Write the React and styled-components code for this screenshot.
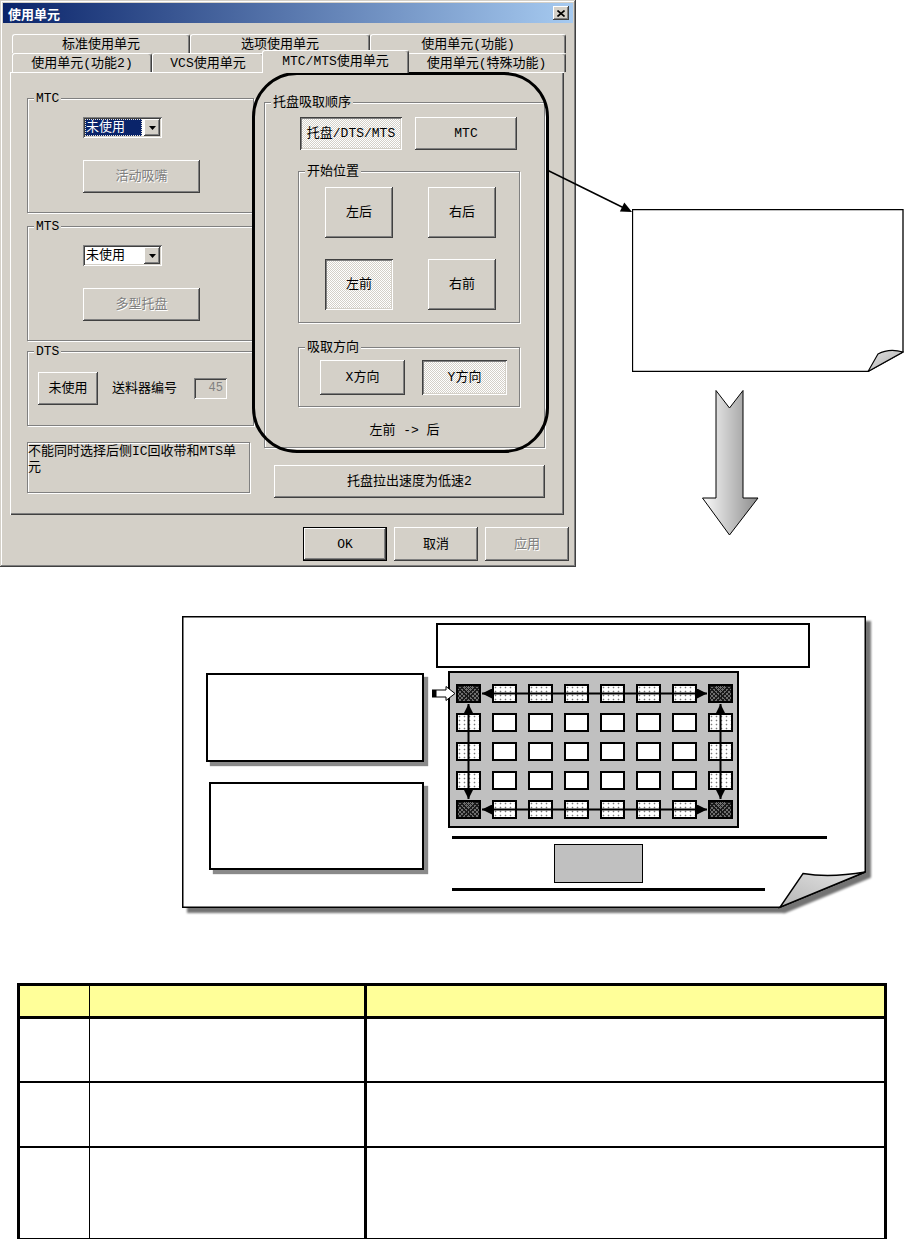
import React from 'react';
import styled, { createGlobalStyle, css } from 'styled-components';

const FACE = '#d4d0c8';

const GlobalStyle = createGlobalStyle`
  html, body {
    margin: 0;
    background: #fff;
  }
  body {
    font-family: "Liberation Mono", "Noto Sans CJK SC", monospace;
  }
`;

const raised = css`
  box-shadow: inset -1px -1px #404040, inset 1px 1px #fff, inset -2px -2px #808080,
    inset 2px 2px ${FACE};
`;
const pressed = css`
  box-shadow: inset 1px 1px #404040, inset -1px -1px #fff, inset 2px 2px #808080,
    inset -2px -2px ${FACE};
`;
const sunken = css`
  box-shadow: inset 1px 1px #808080, inset -1px -1px #fff, inset 2px 2px #404040,
    inset -2px -2px ${FACE};
`;
const etched = css`
  border: 1px solid #808080;
  box-shadow: inset 1px 1px #fff, 1px 1px #fff;
`;

const Page = styled.div`
  width: 904px;
  height: 1239px;
  overflow: hidden;
`;

const Top = styled.section`
  position: relative;
  display: flex;
  height: 567px;
`;

/* ---------- dialog ---------- */

const Dialog = styled.div`
  box-sizing: border-box;
  width: 576px;
  height: 567px;
  padding: 3px;
  background: ${FACE};
  box-shadow: inset -1px -1px #404040, inset 1px 1px ${FACE}, inset -2px -2px #808080,
    inset 2px 2px #fff;
  font-size: 13px;
  line-height: 15px;
  color: #000;
  display: flex;
  flex-direction: column;
`;

const TitleBar = styled.div`
  height: 20px;
  flex: none;
  padding: 0 4px 0 5px;
  display: flex;
  align-items: center;
  justify-content: space-between;
  background: linear-gradient(to right, #0a246a, #a6caf0);
  color: #fff;
  font-family: "Noto Sans CJK SC", sans-serif;
  font-weight: bold;
  font-size: 13px;
`;

const CloseBox = styled.span`
  width: 16px;
  height: 14px;
  background: ${FACE};
  ${raised};
  display: flex;
  align-items: center;
  justify-content: center;
`;

const TabRow = styled.div`
  display: flex;
  width: 554px;
  height: 19px;
  margin-left: 9px;
  margin-top: ${p => p.$top || 0}px;
`;

const Tab = styled.div`
  flex: 0 0 ${p => p.$w}px;
  box-sizing: border-box;
  height: 19px;
  background: ${FACE};
  border-top: 1px solid #fff;
  border-left: 1px solid #fff;
  border-right: 1px solid #404040;
  border-radius: 3px 3px 0 0;
  box-shadow: inset -1px 0 #808080;
  display: flex;
  align-items: center;
  justify-content: center;
  white-space: nowrap;
  ${p =>
    p.$active &&
    css`
      position: relative;
      z-index: 2;
      flex-basis: ${p.$w + 4}px;
      height: 23px;
      margin: -3px -2px -1px;
      padding-bottom: 2px;
    `}
`;

const Panel = styled.div`
  box-sizing: border-box;
  width: 554px;
  height: 443px;
  margin-left: 7px;
  padding-left: 17px;
  display: flex;
  gap: 10px;
  box-shadow: inset 1px 1px #fff, inset -1px -1px #404040, inset -2px -2px #808080;
`;

const LeftCol = styled.div`
  display: flex;
  flex-direction: column;
  align-items: flex-start;
  padding-top: 26px;
`;

const RightCol = styled.div`
  display: flex;
  flex-direction: column;
  align-items: flex-start;
  padding-top: 30px;
`;

const Group = styled.div`
  position: relative;
  box-sizing: border-box;
  width: ${p => p.$w}px;
  height: ${p => p.$h}px;
  margin: ${p => p.$m || '0'};
  padding: ${p => p.$pad || '0'};
  ${etched};
  display: flex;
  flex-direction: ${p => (p.$row ? 'row' : 'column')};
  align-items: ${p => (p.$row ? 'center' : 'flex-start')};
  gap: ${p => p.$gap || 0}px;
`;

const Caption = styled.span`
  position: absolute;
  top: -8px;
  left: 6px;
  padding: 0 2px;
  background: ${FACE};
`;

const ButtonRow = styled.div`
  display: flex;
  gap: 13px;
  margin-left: 2px;
`;

const Btn = styled.button`
  box-sizing: border-box;
  flex: none;
  width: ${p => p.$w}px;
  height: ${p => p.$h}px;
  margin: ${p => p.$m || '0'};
  padding: 0;
  border: ${p => (p.$default ? '1px solid #000' : 'none')};
  background: ${FACE};
  font: inherit;
  color: #000;
  ${raised};
  ${p =>
    p.$checked &&
    css`
      background: repeating-conic-gradient(#fff 0 25%, ${FACE} 0 50%) 0 0 / 2px 2px;
      ${pressed};
    `}
  &:disabled {
    color: #808080;
    text-shadow: 1px 1px #fff;
  }
`;

const Combo = styled.div`
  box-sizing: border-box;
  width: 79px;
  height: 21px;
  padding: 2px;
  background: #fff;
  ${sunken};
  display: flex;
  gap: 2px;
`;

const ComboValue = styled.span`
  flex: 1;
  display: flex;
  align-items: center;
  padding-left: 1px;
  ${p =>
    p.$selected &&
    css`
      background: #0a246a;
      color: #fff;
      outline: 1px dotted #e8e4dc;
      outline-offset: -1px;
    `}
`;

const ComboButton = styled.span`
  width: 16px;
  height: 17px;
  background: ${FACE};
  ${raised};
  display: flex;
  align-items: center;
  justify-content: center;
`;

const FieldLabel = styled.span`
  margin-left: 14px;
  white-space: nowrap;
`;

const Edit = styled.div`
  box-sizing: border-box;
  width: 33px;
  height: 21px;
  margin-left: 17px;
  padding: 3px 4px 0 0;
  ${sunken};
  background: ${FACE};
  color: #808080;
  text-align: right;
  font-size: 12px;
`;

const Notice = styled.div`
  box-sizing: border-box;
  width: 223px;
  height: 51px;
  margin-top: 16px;
  padding: 1px 9px 0 0;
  ${etched};
  line-height: 16px;
`;

const StartGrid = styled.div`
  display: grid;
  grid-template-columns: 68px 68px;
  grid-auto-rows: 51px;
  column-gap: 35px;
  row-gap: 21px;
`;

const Status = styled.div`
  align-self: stretch;
  margin: 16px 0 0 -33px;
  text-align: center;
`;

const Footer = styled.div`
  display: flex;
  justify-content: flex-end;
  gap: 7px;
  margin-top: 12px;
  padding-right: 4px;
`;

/* ---------- annotations ---------- */

const Highlight = styled.div`
  position: absolute;
  left: 252px;
  top: 72px;
  width: 297px;
  height: 381px;
  box-sizing: border-box;
  border: 3px solid #000;
  border-radius: 45px;
  pointer-events: none;
`;

const Connector = styled.svg`
  position: absolute;
  left: 540px;
  top: 160px;
  overflow: visible;
`;

const NoteCol = styled.div`
  display: flex;
  flex-direction: column;
  align-items: flex-start;
  margin-left: 56px;
  padding-top: 209px;
`;

const DownArrow = styled.svg`
  margin: 18px 0 0 70px;
`;

/* ---------- tray diagram ---------- */

const Diagram = styled.div`
  position: relative;
  width: 684px;
  height: 292px;
  margin: 49px 0 0 182px;
`;

const Paper = styled.svg`
  position: absolute;
  left: 0;
  top: 0;
  overflow: visible;
  filter: drop-shadow(5px 5px 1px rgba(0, 0, 0, 0.55));
`;

const DiagramBody = styled.div`
  position: relative;
  display: flex;
  padding-top: 7px;
`;

const SideCol = styled.div`
  display: flex;
  flex-direction: column;
  align-items: flex-start;
  gap: 20px;
  padding: 50px 0 0 24px;
`;

const NoteBox = styled.div`
  box-sizing: border-box;
  width: ${p => p.$w}px;
  height: ${p => p.$h}px;
  margin-left: ${p => p.$ml || 0}px;
  background: #fff;
  border: 2px solid #000;
  ${p => p.$shadow && css`box-shadow: 4px 4px 1px #8a8a8a;`}
`;

const MainCol = styled.div`
  display: flex;
  flex-direction: column;
  align-items: flex-start;
  margin-left: 12px;
`;

const Tray = styled.div`
  position: relative;
  box-sizing: border-box;
  width: 291px;
  height: 157px;
  margin: 3px 0 0 12px;
  padding: 11px 0 0 6px;
  background: #c0c0c0;
  border: 2px solid #000;
  display: grid;
  grid-template-columns: repeat(8, 25px);
  grid-auto-rows: 19px;
  column-gap: 11px;
  row-gap: 10px;
`;

const cellLook = {
  corner: css`
    background-color: #6e6e6e;
    background-image: repeating-linear-gradient(45deg, #1a1a1a 0 1px, transparent 1px 3px),
      repeating-linear-gradient(-45deg, #1a1a1a 0 1px, transparent 1px 3px);
  `,
  edge: css`
    background: #fff radial-gradient(circle at 1.5px 1.5px, #777 0.7px, transparent 1.1px) 0 0 / 5px 4px;
  `,
  plain: css`
    background: #fff;
  `,
};

const Cell = styled.div`
  box-sizing: border-box;
  border: 2px solid #000;
  ${p => cellLook[p.$kind]};
`;

const TrayArrows = styled.svg`
  position: absolute;
  left: 0;
  top: 0;
  overflow: visible;
`;

const Rule = styled.div`
  width: ${p => p.$w}px;
  height: 3px;
  margin: ${p => p.$mt}px 0 0 16px;
  background: #000;
`;

const Slot = styled.div`
  box-sizing: border-box;
  width: 89px;
  height: 39px;
  margin: 5px 0 0 118px;
  background: #c0c0c0;
  border: 1.5px solid #000;
`;

/* ---------- table ---------- */

const InfoTable = styled.table`
  margin: 75px 0 0 17px;
  width: 870px;
  table-layout: fixed;
  border-collapse: collapse;
  border: 3px solid #000;
`;

const Th = styled.th`
  height: 30px;
  padding: 0;
  background: #ffff99;
  border-bottom: 3px solid #000;
  border-left: ${p => p.$sep || 'none'};
`;

const Td = styled.td`
  height: ${p => p.$h}px;
  padding: 0;
  border-top: 2px solid #000;
  border-left: ${p => p.$sep || 'none'};
`;

const THIN = '1px solid #000';
const THICK = '3px solid #000';

const cellKind = (r, c) => {
  const edgeR = r === 0 || r === 4;
  const edgeC = c === 0 || c === 7;
  if (edgeR && edgeC) return 'corner';
  if (edgeR || edgeC) return 'edge';
  return 'plain';
};

const DropGlyph = () => (
  <svg width="7" height="4" viewBox="0 0 7 4">
    <path d="M0 0 H7 L3.5 4 z" fill="#000" />
  </svg>
);

const Arrowhead = ({ id }) => (
  <marker id={id} viewBox="0 0 10 10" refX="10" refY="5" markerWidth="5" markerHeight="5" orient="auto-start-reverse">
    <path d="M0 0 L10 5 L0 10 z" fill="#000" />
  </marker>
);

const App = () => {
  const cells = [];
  for (let r = 0; r < 5; r++) {
    for (let c = 0; c < 8; c++) cells.push(<Cell key={`${r}-${c}`} $kind={cellKind(r, c)} />);
  }

  return (
    <Page>
      <GlobalStyle />
      <Top>
        <Dialog>
          <TitleBar>
            <span>使用单元</span>
            <CloseBox>
              <svg width="8" height="7" viewBox="0 0 8 7">
                <path d="M0.5 0.5 L7.5 6.5 M7.5 0.5 L0.5 6.5" stroke="#000" strokeWidth="1.6" />
              </svg>
            </CloseBox>
          </TitleBar>

          <TabRow $top={11}>
            <Tab $w={178}>标准使用单元</Tab>
            <Tab $w={180}>选项使用单元</Tab>
            <Tab $w={196}>使用单元(功能)</Tab>
          </TabRow>
          <TabRow>
            <Tab $w={140}>使用单元(功能2)</Tab>
            <Tab $w={112}>VCS使用单元</Tab>
            <Tab $w={143} $active>MTC/MTS使用单元</Tab>
            <Tab $w={159}>使用单元(特殊功能)</Tab>
          </TabRow>

          <Panel>
            <LeftCol>
              <Group $w={227} $h={115} $pad="18px 0 0 55px" $gap={22}>
                <Caption>MTC</Caption>
                <Combo>
                  <ComboValue $selected>未使用</ComboValue>
                  <ComboButton>
                    <DropGlyph />
                  </ComboButton>
                </Combo>
                <Btn $w={117} $h={33} disabled>活动吸嘴</Btn>
              </Group>

              <Group $w={227} $h={115} $m="13px 0 0" $pad="18px 0 0 55px" $gap={22}>
                <Caption>MTS</Caption>
                <Combo>
                  <ComboValue>未使用</ComboValue>
                  <ComboButton>
                    <DropGlyph />
                  </ComboButton>
                </Combo>
                <Btn $w={117} $h={33} disabled>多型托盘</Btn>
              </Group>

              <Group $w={227} $h={75} $m="10px 0 0" $pad="0 0 0 10px" $row>
                <Caption>DTS</Caption>
                <Btn $w={60} $h={33}>未使用</Btn>
                <FieldLabel>送料器编号</FieldLabel>
                <Edit>45</Edit>
              </Group>

              <Notice>不能同时选择后侧IC回收带和MTS单元</Notice>
            </LeftCol>

            <RightCol>
              <Group $w={281} $h={346} $pad="14px 0 0 33px">
                <Caption>托盘吸取顺序</Caption>
                <ButtonRow>
                  <Btn $w={102} $h={33} $checked>托盘/DTS/MTS</Btn>
                  <Btn $w={102} $h={33}>MTC</Btn>
                </ButtonRow>

                <Group $w={222} $h={152} $m="21px 0 0" $pad="15px 0 0 26px">
                  <Caption>开始位置</Caption>
                  <StartGrid>
                    <Btn $w={68} $h={51}>左后</Btn>
                    <Btn $w={68} $h={51}>右后</Btn>
                    <Btn $w={68} $h={51} $checked>左前</Btn>
                    <Btn $w={68} $h={51}>右前</Btn>
                  </StartGrid>
                </Group>

                <Group $w={222} $h={60} $m="24px 0 0" $pad="0 0 0 21px" $row $gap={17}>
                  <Caption>吸取方向</Caption>
                  <Btn $w={85} $h={35}>X方向</Btn>
                  <Btn $w={85} $h={35} $checked>Y方向</Btn>
                </Group>

                <Status>左前 -&gt; 后</Status>
              </Group>

              <Btn $w={271} $h={33} $m="17px 0 0 10px">托盘拉出速度为低速2</Btn>
            </RightCol>
          </Panel>

          <Footer>
            <Btn $w={84} $h={34} $default>OK</Btn>
            <Btn $w={84} $h={34}>取消</Btn>
            <Btn $w={84} $h={34} disabled>应用</Btn>
          </Footer>
        </Dialog>

        <NoteCol>
          <svg width="272" height="163" viewBox="0 0 272 163">
            <defs>
              <linearGradient id="flapA" x1="0" y1="0" x2="1" y2="1">
                <stop offset="0" stopColor="#e4e4e4" />
                <stop offset="1" stopColor="#a8a8a8" />
              </linearGradient>
            </defs>
            <path d="M0.5 0.5 H271 V143 L236 162.5 H0.5 Z" fill="#fff" stroke="#000" strokeWidth="1.3" />
            <path d="M236 162.5 L246 145 Q257 139 271 143 Z" fill="url(#flapA)" stroke="#000" strokeWidth="1.1" />
          </svg>
          <DownArrow width="57" height="146" viewBox="0 0 57 146">
            <defs>
              <linearGradient id="shaft" x1="0" y1="0" x2="1" y2="0">
                <stop offset="0" stopColor="#fbfbfb" />
                <stop offset="1" stopColor="#8c8c8c" />
              </linearGradient>
            </defs>
            <path
              d="M14 0.5 L27.5 18 L41 0.5 V108 H56 L27.5 145 L0.5 108 H14 Z"
              fill="url(#shaft)"
              stroke="#000"
              strokeWidth="1"
            />
          </DownArrow>
        </NoteCol>

        <Highlight />
        <Connector width="100" height="60">
          <line x1="7" y1="10" x2="83" y2="47.5" stroke="#000" strokeWidth="1.5" />
          <polygon points="92,52 79.9,51.6 84.3,42.6" fill="#000" />
        </Connector>
      </Top>

      <Diagram>
        <Paper width="684" height="292" viewBox="0 0 684 292">
          <defs>
            <linearGradient id="flapB" x1="0" y1="1" x2="1" y2="0">
              <stop offset="0" stopColor="#b5b5b5" />
              <stop offset="1" stopColor="#e6e6e6" />
            </linearGradient>
          </defs>
          <path d="M0.75 0.75 H683.25 V256 L598 291.25 H0.75 Z" fill="#fff" stroke="#000" strokeWidth="1.5" />
          <path d="M598 291.25 L621 257.5 Q648 262 683.25 256 Z" fill="url(#flapB)" stroke="#000" strokeWidth="1.4" />
        </Paper>

        <DiagramBody>
          <SideCol>
            <NoteBox $w={218} $h={89} $shadow />
            <NoteBox $w={215} $h={88} $ml={3} $shadow />
          </SideCol>

          <MainCol>
            <NoteBox $w={374} $h={45} />
            <Tray>
              {cells}
              <TrayArrows width="287" height="153" viewBox="0 0 287 153">
                <defs>
                  <Arrowhead id="ah" />
                </defs>
                <g stroke="#000" strokeWidth="2" fill="none">
                  <line x1="32" y1="20.5" x2="257" y2="20.5" markerStart="url(#ah)" markerEnd="url(#ah)" />
                  <line x1="32" y1="136.5" x2="257" y2="136.5" markerStart="url(#ah)" markerEnd="url(#ah)" />
                  <line x1="18.5" y1="31" x2="18.5" y2="126" markerStart="url(#ah)" markerEnd="url(#ah)" />
                  <line x1="270.5" y1="31" x2="270.5" y2="126" markerStart="url(#ah)" markerEnd="url(#ah)" />
                </g>
                <rect x="-18" y="16.5" width="4" height="8" fill="#000" />
                <path d="M-14 17 H-4 V13.5 L5 20.5 L-4 27.5 V24 H-14 Z" fill="#fff" stroke="#000" strokeWidth="1" />
              </TrayArrows>
            </Tray>
            <Rule $w={375} $mt={8} />
            <Slot />
            <Rule $w={313} $mt={5} />
          </MainCol>
        </DiagramBody>
      </Diagram>

      <InfoTable>
        <colgroup>
          <col style={{ width: 71 }} />
          <col style={{ width: 276 }} />
          <col />
        </colgroup>
        <thead>
          <tr>
            <Th />
            <Th $sep={THIN} />
            <Th $sep={THICK} />
          </tr>
        </thead>
        <tbody>
          {[62, 63, 90].map(h => (
            <tr key={h}>
              <Td $h={h} />
              <Td $h={h} $sep={THIN} />
              <Td $h={h} $sep={THICK} />
            </tr>
          ))}
        </tbody>
      </InfoTable>
    </Page>
  );
};

export default App;
